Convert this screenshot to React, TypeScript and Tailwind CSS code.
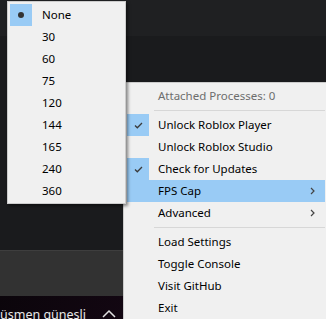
import React from "react";

const font = { fontFamily: '"Noto Sans", "Liberation Sans", sans-serif' };

const Check = () => (
  <svg width="9" height="7" viewBox="0 0 9 7" fill="none">
    <path d="M1 3.5 L3.3 5.8 L8 1" stroke="#3a3a3a" strokeWidth="1.3" />
  </svg>
);

const Chevron = () => (
  <svg width="5" height="8" viewBox="0 0 5 8" fill="none">
    <path d="M1 1 L4 4 L1 7" stroke="#444" strokeWidth="1.2" />
  </svg>
);

interface RowProps {
  label: string;
  checked?: boolean;
  active?: boolean;
  sub?: boolean;
  disabled?: boolean;
}

const MenuRow = ({ label, checked, active, sub, disabled }: RowProps) => (
  <div className={`flex h-[22px] items-center ${active ? "bg-[#99cbf5]" : ""}`}>
    <div
      className={`flex h-[22px] w-[22px] shrink-0 items-center justify-center ${
        checked ? "bg-[#99cbf5]" : ""
      }`}
    >
      {checked && <Check />}
    </div>
    <span
      className={`ml-[9px] flex-1 text-[11.5px] ${disabled ? "text-[#6d6d6d]" : "text-[#000]"}`}
    >
      {label}
    </span>
    {sub && (
      <span className="mr-[10px] flex items-center">
        <Chevron />
      </span>
    )}
  </div>
);

const Separator = () => (
  <div className="flex h-[7px] items-center pl-[27px]">
    <div className="h-px w-full bg-[#d7d7d7]" />
  </div>
);

const fpsOptions = ["None", "30", "60", "75", "120", "144", "165", "240", "360"];

export default function App() {
  return (
    <div className="relative h-[319px] w-[326px] overflow-hidden" style={font}>
      {/* window behind */}
      <div className="flex h-full flex-col">
        <div className="h-[36px] bg-[#1f2022]" />
        <div className="h-[214px] bg-[#1a1b1d]" />
        <div className="h-[46px] border-t border-[#3e3e3e] bg-[#323232]" />
        <div className="flex h-[23px] items-end bg-[linear-gradient(115deg,#0b050b_0%,#140713_45%,#3a0f33_55%,#12060f_62%,#0b050b_100%)]">
          <span className="-mb-[4px] text-[12.5px] leading-[16px] text-[#e8e8e8]">üsmen güneşli</span>
          <svg className="mb-[1px] ml-[16px]" width="14" height="9" viewBox="0 0 14 9" fill="none">
            <path d="M1 8 L7 2 L13 8" stroke="#e0e0e0" strokeWidth="1.5" />
          </svg>
        </div>
      </div>

      {/* main context menu */}
      <div className="absolute left-[123px] top-[82px] w-[204px] border border-[#cccccc] bg-[#f0f0f0] pb-[2px] pl-[3px] pr-[1px] pt-[2px]">
        <MenuRow label="Attached Processes: 0" disabled />
        <Separator />
        <MenuRow label="Unlock Roblox Player" checked />
        <MenuRow label="Unlock Roblox Studio" />
        <MenuRow label="Check for Updates" checked />
        <MenuRow label="FPS Cap" sub active />
        <MenuRow label="Advanced" sub />
        <Separator />
        <MenuRow label="Load Settings" />
        <MenuRow label="Toggle Console" />
        <MenuRow label="Visit GitHub" />
        <MenuRow label="Exit" />
      </div>

      {/* FPS submenu */}
      <div className="absolute left-[7px] top-[1px] w-[119px] border border-[#cccccc] bg-[#f0f0f0] px-[2px] pb-[1px] pt-[2px] shadow-[2px_2px_3px_rgba(0,0,0,0.45)]">
        {fpsOptions.map((o, i) => (
          <div key={o} className="flex h-[22px] items-center">
            <div
              className={`flex h-[22px] w-[22px] items-center justify-center ${
                i === 0 ? "bg-[#99cbf5]" : ""
              }`}
            >
              {i === 0 && <div className="h-[6px] w-[6px] rounded-full bg-[#333]" />}
            </div>
            <span className="ml-[10px] text-[11.5px] text-[#000]">{o}</span>
          </div>
        ))}
      </div>
    </div>
  );
}
